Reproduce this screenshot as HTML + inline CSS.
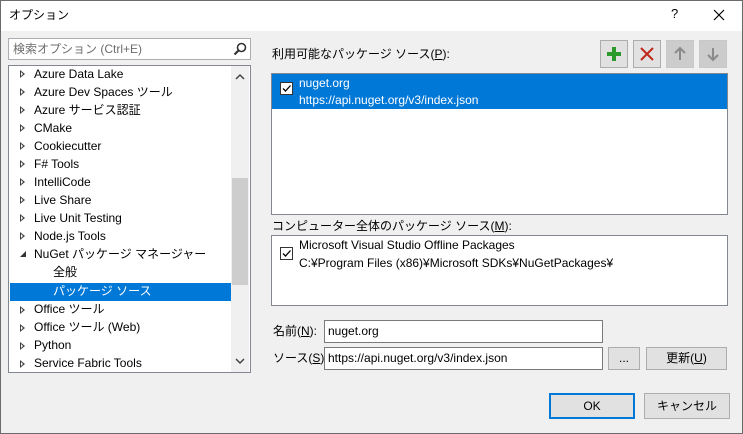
<!DOCTYPE html>
<html><head><meta charset="utf-8"><style>
*{box-sizing:border-box;margin:0;padding:0}
body{width:743px;height:434px;background:#f0f0f0;font-family:"Segoe UI","Liberation Sans","Noto Sans CJK JP",sans-serif;font-size:12px;color:#000;position:relative;overflow:hidden}
.a{position:absolute}
.t{position:absolute;white-space:nowrap;line-height:16px}
.box{position:absolute;background:#fff;border:1px solid #7a7a7a}
.btn{position:absolute;background:#e1e1e1;border:1px solid #adadad;text-align:center;line-height:20px}
.tri{position:absolute;width:0;height:0;border-top:4px solid transparent;border-bottom:4px solid transparent;border-left:5px solid #444}
.tri:after{content:"";position:absolute;left:-4px;top:-2px;border-top:2px solid transparent;border-bottom:2px solid transparent;border-left:2px solid #fff}
.cb{position:absolute;width:13px;height:13px;border:1px solid #333;background:#fff}
</style></head><body>
<div class="a" style="left:0;top:0;width:743px;height:31px;background:#fff"></div>
<div class="a" style="left:0;top:0;width:743px;height:434px;border:1px solid #6b6b6b;z-index:5"></div>
<div class="t" style="left:9px;top:7px">オプション</div>
<div class="t" style="left:671px;top:6px;font-size:13px">?</div>
<svg class="a" style="left:713px;top:9px" width="12" height="12"><path d="M1 1L11 11M11 1L1 11" stroke="#000" stroke-width="1.2"/></svg>

<div class="box" style="left:8px;top:38px;width:243px;height:22px;border-color:#abadb3"></div>
<div class="t" style="left:13px;top:41px;color:#6d6d6d">検索オプション (Ctrl+E)</div>
<svg class="a" style="left:233px;top:42px" width="14" height="14"><circle cx="8.5" cy="5.5" r="4" stroke="#333" stroke-width="1.6" fill="none"/><path d="M5.5 8.5L1.5 12.5" stroke="#333" stroke-width="2.2"/></svg>

<div class="box" style="left:8px;top:65px;width:243px;height:308px;border-color:#828790"></div>
<div class="a" style="left:231px;top:66px;width:18px;height:306px;background:#f0f0f0"></div>
<div class="a" style="left:232px;top:178px;width:16px;height:107px;background:#cdcdcd"></div>
<svg class="a" style="left:235px;top:73px" width="10" height="8"><path d="M1 6L5 2L9 6" stroke="#444" stroke-width="1.5" fill="none"/></svg>
<svg class="a" style="left:235px;top:357px" width="10" height="8"><path d="M1 2L5 6L9 2" stroke="#444" stroke-width="1.5" fill="none"/></svg>
<div class="a" style="left:10px;top:283px;width:221px;height:18px;background:#0078d7"></div>
<div class="tri" style="top:70px;left:20px"></div><div class="t" style="left:34px;top:66px">Azure Data Lake</div>
<div class="tri" style="top:88px;left:20px"></div><div class="t" style="left:34px;top:84px">Azure Dev Spaces ツール</div>
<div class="tri" style="top:106px;left:20px"></div><div class="t" style="left:34px;top:102px">Azure サービス認証</div>
<div class="tri" style="top:124px;left:20px"></div><div class="t" style="left:34px;top:120px">CMake</div>
<div class="tri" style="top:142px;left:20px"></div><div class="t" style="left:34px;top:138px">Cookiecutter</div>
<div class="tri" style="top:160px;left:20px"></div><div class="t" style="left:34px;top:156px">F# Tools</div>
<div class="tri" style="top:178px;left:20px"></div><div class="t" style="left:34px;top:174px">IntelliCode</div>
<div class="tri" style="top:196px;left:20px"></div><div class="t" style="left:34px;top:192px">Live Share</div>
<div class="tri" style="top:214px;left:20px"></div><div class="t" style="left:34px;top:210px">Live Unit Testing</div>
<div class="tri" style="top:232px;left:20px"></div><div class="t" style="left:34px;top:228px">Node.js Tools</div>
<svg class="a" style="left:19px;top:250px" width="8" height="8"><path d="M7 1L7 7L1 7Z" fill="#333"/></svg><div class="t" style="left:34px;top:246px">NuGet パッケージ マネージャー</div>
<div class="t" style="left:53px;top:264px">全般</div>
<div class="t" style="left:53px;top:283px;color:#fff">パッケージ ソース</div>
<div class="tri" style="top:306px;left:20px"></div><div class="t" style="left:34px;top:301px">Office ツール</div>
<div class="tri" style="top:324px;left:20px"></div><div class="t" style="left:34px;top:319px">Office ツール (Web)</div>
<div class="tri" style="top:342px;left:20px"></div><div class="t" style="left:34px;top:337px">Python</div>
<div class="tri" style="top:360px;left:20px"></div><div class="t" style="left:34px;top:355px">Service Fabric Tools</div>

<div class="t" style="left:272px;top:46px">利用可能なパッケージ ソース(<u>P</u>):</div>
<div class="a" style="left:600px;top:40px;width:28px;height:28px;border:1px solid #adadad;background:#e1e1e1"></div>
<svg class="a" style="left:605px;top:45px" width="18" height="18"><path d="M7 2h4v5h5v4h-5v5H7v-5H2V7h5z" fill="#2a9a2a"/></svg>
<div class="a" style="left:633px;top:40px;width:28px;height:28px;border:1px solid #adadad;background:#e1e1e1"></div>
<svg class="a" style="left:638px;top:45px" width="18" height="18"><path d="M3 3L15 15M15 3L3 15" stroke="#c0271a" stroke-width="2"/></svg>
<div class="a" style="left:666px;top:40px;width:28px;height:28px;border:1px solid #c8c8c8;background:#cccccc"></div>
<svg class="a" style="left:671px;top:45px" width="18" height="18"><path d="M9 3V15M4 8L9 3L14 8" stroke="#8a8a8a" stroke-width="2" fill="none"/></svg>
<div class="a" style="left:699px;top:40px;width:28px;height:28px;border:1px solid #c8c8c8;background:#cccccc"></div>
<svg class="a" style="left:704px;top:45px" width="18" height="18"><path d="M9 3V15M4 10L9 15L14 10" stroke="#8a8a8a" stroke-width="2" fill="none"/></svg>

<div class="box" style="left:271px;top:73px;width:457px;height:142px;border-color:#828790"></div>
<div class="a" style="left:272px;top:74px;width:455px;height:35px;background:#0078d7"></div>
<div class="cb" style="left:280px;top:82px"></div>
<svg class="a" style="left:281px;top:83px" width="11" height="11"><path d="M2 5.5L4.5 8L9.5 2.5" stroke="#000" stroke-width="1.3" fill="none"/></svg>
<div class="t" style="left:299px;top:75px;color:#fff">nuget.org</div>
<div class="t" style="left:299px;top:92px;color:#fff">https://api.nuget.org/v3/index.json</div>

<div class="t" style="left:272px;top:218px">コンピューター全体のパッケージ ソース(<u>M</u>):</div>
<div class="box" style="left:271px;top:235px;width:457px;height:71px;border-color:#828790"></div>
<div class="cb" style="left:280px;top:247px"></div>
<svg class="a" style="left:281px;top:248px" width="11" height="11"><path d="M2 5.5L4.5 8L9.5 2.5" stroke="#000" stroke-width="1.3" fill="none"/></svg>
<div class="t" style="left:299px;top:237px">Microsoft Visual Studio Offline Packages</div>
<div class="t" style="left:299px;top:255px">C:¥Program Files (x86)¥Microsoft SDKs¥NuGetPackages¥</div>

<div class="t" style="left:273px;top:323px">名前(<u>N</u>):</div>
<div class="box" style="left:324px;top:320px;width:279px;height:23px"></div>
<div class="t" style="left:328px;top:323px">nuget.org</div>
<div class="t" style="left:273px;top:350px">ソース(<u>S</u>):</div>
<div class="box" style="left:324px;top:347px;width:279px;height:23px"></div>
<div class="t" style="left:328px;top:350px">https://api.nuget.org/v3/index.json</div>
<div class="btn" style="left:608px;top:347px;width:32px;height:23px">...</div>
<div class="btn" style="left:646px;top:347px;width:81px;height:23px">更新(<u>U</u>)</div>

<div class="btn" style="left:549px;top:393px;width:86px;height:26px;border:2px solid #0078d7;line-height:22px">OK</div>
<div class="btn" style="left:644px;top:393px;width:86px;height:26px;line-height:24px">キャンセル</div>
</body></html>
